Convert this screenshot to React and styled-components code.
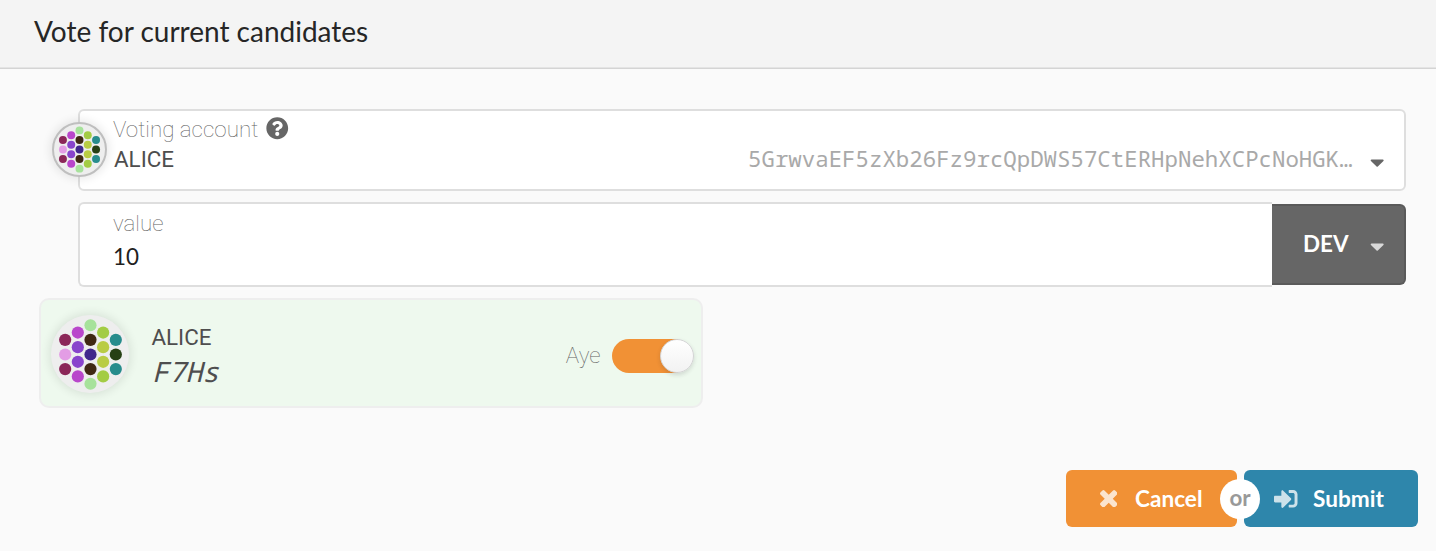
import React from 'react';
import styled, { createGlobalStyle } from 'styled-components';
import { FaCaretDown, FaQuestionCircle, FaSignInAlt } from 'react-icons/fa';

const GlobalStyle = createGlobalStyle`
  * { box-sizing: border-box; }
  body { margin: 0; background: #fafafa; }
`;

const Modal = styled.div`
  display: flex;
  flex-direction: column;
  width: 1436px;
  height: 551px;
  background: #fafafa;
  font-family: Lato, sans-serif;
  color: #4e4e4e;
  overflow: hidden;
`;

const Header = styled.header`
  height: 69px;
  padding: 14px 34px 0;
  background: #f4f4f4;
  border-bottom: 1px solid #d4d4d4;
  box-shadow: inset 0 -1px #e4e4e4;
`;

const Title = styled.h1`
  margin: 0;
  font-size: 28px;
  line-height: 34px;
  font-weight: 400;
  color: #262626;
`;

const Content = styled.main`
  display: flex;
  flex-direction: column;
  flex: 1;
  padding: 40px 30px 0 39px;
`;

const Field = styled.div`
  display: flex;
  height: ${p => p.$height}px;
  margin: 0 0 ${p => p.$gap}px 39px;
`;

const FieldBox = styled.div`
  position: relative;
  flex: 1;
  padding: ${p => (p.$joined ? 6 : 5)}px 16px 0 33px;
  background: #fff;
  border: 2px solid #dedede;
  border-right-width: ${p => (p.$joined ? 0 : 2)}px;
  border-radius: ${p => (p.$joined ? '6px 0 0 6px' : '6px')};
`;

const Label = styled.label`
  display: flex;
  align-items: center;
  gap: 8px;
  height: 26px;
  font: 100 22.4px/26px Roboto, sans-serif;
  color: #626262;
  svg { color: #666; margin-bottom: 1px; }
`;

const AccountLine = styled.div`
  display: flex;
  align-items: center;
  height: 34px;
  padding-left: 1px;
`;

const AccountName = styled.span`
  font: 400 22.4px/26px Roboto, sans-serif;
  color: #4e4e4e;
`;

const Address = styled.span`
  margin: 0 0 0 auto;
  font: 400 22.4px/26px "Noto Sans Mono", "DejaVu Sans Mono", monospace;
  color: #a9a9a9;
`;

const Caret = styled(FaCaretDown)`
  flex: none;
  margin: ${p => p.$drop}px 0 0 ${p => p.$space}px;
  color: ${p => p.color};
`;

const Amount = styled.div`
  margin-top: 7px;
  font-size: 22.4px;
  line-height: 28px;
  color: #212121;
`;

const UnitButton = styled.button`
  display: flex;
  align-items: center;
  width: 134px;
  height: 81px;
  margin-top: 2px;
  padding: 0 0 2px 31px;
  background: #666;
  border: 2px solid #5a5a5a;
  border-left: 0;
  border-radius: 0 6px 6px 0;
  font: 700 22.4px/28px Lato, sans-serif;
  color: #fff;
`;

const IdentityBadge = styled.div`
  width: ${p => p.$size}px;
  height: ${p => p.$size}px;
  flex: none;
  background: #eee;
  border: ${p => p.$ring}px solid #bfbfbf;
  border-radius: 50%;
  box-shadow: 0 0 10px 2px rgba(0, 0, 0, 0.09);
  svg { display: block; width: 100%; height: 100%; }
`;

const AccountBadge = styled.div`
  position: absolute;
  left: -28px;
  top: 11px;
`;

const Candidate = styled.section`
  display: flex;
  align-items: center;
  width: 664px;
  height: 110px;
  padding: 2px 7px 0 10.4px;
  background: #eef9ee;
  border: 2px solid #eee;
  border-radius: 10px;
`;

const CandidateInfo = styled.div`
  display: flex;
  flex-direction: column;
  margin: 4px 0 0 22px;
  flex: 1;
`;

const CandidateTag = styled.em`
  margin: 3px 0 0 0.6px;
  font: italic 400 28px/36px "Noto Sans Mono", "DejaVu Sans Mono", monospace;
  letter-spacing: -0.1px;
`;

const AyeLabel = styled(Label)`
  margin: 1px 1.5px 0 0;
`;

const Toggle = styled.div`
  display: flex;
  justify-content: flex-end;
  width: 82px;
  height: 34px;
  margin: 3px 0 0 10px;
  background: linear-gradient(90deg, #f19135 66px, transparent 66px);
  border-radius: 17px;
`;

const Knob = styled.span`
  width: 34px;
  height: 34px;
  background: linear-gradient(#fff, #f2f2f2);
  border: 1px solid #d4d4d5;
  border-radius: 50%;
  box-shadow: 0 2px 4px rgba(34, 36, 38, 0.15);
`;

const Actions = styled.footer`
  display: flex;
  justify-content: flex-end;
  height: 57px;
  margin: 0 18px 24px 0;
`;

const ActionButton = styled.button`
  display: flex;
  align-items: center;
  gap: ${p => p.$gap}px;
  width: ${p => p.$width}px;
  padding: 0 0 0 ${p => p.$inset}px;
  border: 0;
  border-radius: 6px;
  background: ${p => p.$color};
  color: #fff;
  font: 700 22.6px/28px Lato, sans-serif;
  svg { opacity: 0.76; }
`;

const Divider = styled.div`
  position: relative;
  width: 7px;
`;

const Or = styled.span`
  position: absolute;
  z-index: 1;
  top: 9px;
  left: -17px;
  width: 40px;
  height: 40px;
  border-radius: 50%;
  background: #fff;
  color: #999;
  font-size: 22.4px;
  font-weight: 700;
  line-height: 38px;
  text-align: center;
`;

const COLUMNS = [
  ['#8b2658', '#e39de5', '#8b2658'],
  ['#b946cb', '#8844cc', '#8844cc', '#b946cb'],
  ['#a7e29b', '#3f2813', '#40278c', '#3f2813', '#a7e29b'],
  ['#a3cc44', '#b9cc44', '#b9cc44', '#a3cc44'],
  ['#278c8c', '#264014', '#278c8c'],
];

function Identicon({ size, ring = 0 }) {
  return (
    <IdentityBadge $size={size} $ring={ring}>
      <svg viewBox={ring ? '0 0 64 64' : '-0.4 -0.4 64 64'}>
        {COLUMNS.map((column, c) =>
          column.map((fill, i) => (
            <circle
              key={`${c}-${i}`}
              cx={32 + (c - 2) * 10.39}
              cy={32 + (i - (column.length - 1) / 2) * 12}
              r="5"
              fill={fill}
            />
          ))
        )}
      </svg>
    </IdentityBadge>
  );
}

function CrossIcon() {
  return (
    <svg width="17.5" height="17.5" viewBox="302 366 1188 1188" fill="currentColor">
      <path d="M1490 1322q0 40-28 68l-136 136q-28 28-68 28t-68-28l-294-294-294 294q-28 28-68 28t-68-28l-136-136q-28-28-28-68t28-68l294-294-294-294q-28-28-28-68t28-68l136-136q28-28 68-28t68 28l294 294 294-294q28-28 68-28t68 28l136 136q28 28 28 68t-28 68l-294 294 294 294q28 28 28 68z" />
    </svg>
  );
}

export default function App() {
  return (
    <Modal>
      <GlobalStyle />
      <Header>
        <Title>Vote for current candidates</Title>
      </Header>
      <Content>
        <Field $height={82} $gap={11}>
          <FieldBox>
            <AccountBadge><Identicon size={55} ring={2} /></AccountBadge>
            <Label>Voting account <FaQuestionCircle size={22.5} /></Label>
            <AccountLine>
              <AccountName>ALICE</AccountName>
              <Address>5GrwvaEF5zXb26Fz9rcQpDWS57CtERHpNehXCPcNoHGK…</Address>
              <Caret size={22.4} color="#666" $drop={7} $space={13} />
            </AccountLine>
          </FieldBox>
        </Field>
        <Field $height={85} $gap={11}>
          <FieldBox $joined>
            <Label>value</Label>
            <Amount>10</Amount>
          </FieldBox>
          <UnitButton>DEV <Caret size={22.4} color="#d9d9d9" $drop={6} $space={18} /></UnitButton>
        </Field>
        <Candidate>
          <Identicon size={78} />
          <CandidateInfo>
            <AccountName>ALICE</AccountName>
            <CandidateTag>F7Hs</CandidateTag>
          </CandidateInfo>
          <AyeLabel>Aye</AyeLabel>
          <Toggle><Knob /></Toggle>
        </Candidate>
      </Content>
      <Actions>
        <ActionButton $color="#f19135" $width={171} $inset={33.5} $gap={18}>
          <CrossIcon /> Cancel
        </ActionButton>
        <Divider><Or>or</Or></Divider>
        <ActionButton $color="#2e86ab" $width={174} $inset={30} $gap={15.5}>
          <FaSignInAlt size={23.5} /> Submit
        </ActionButton>
      </Actions>
    </Modal>
  );
}
